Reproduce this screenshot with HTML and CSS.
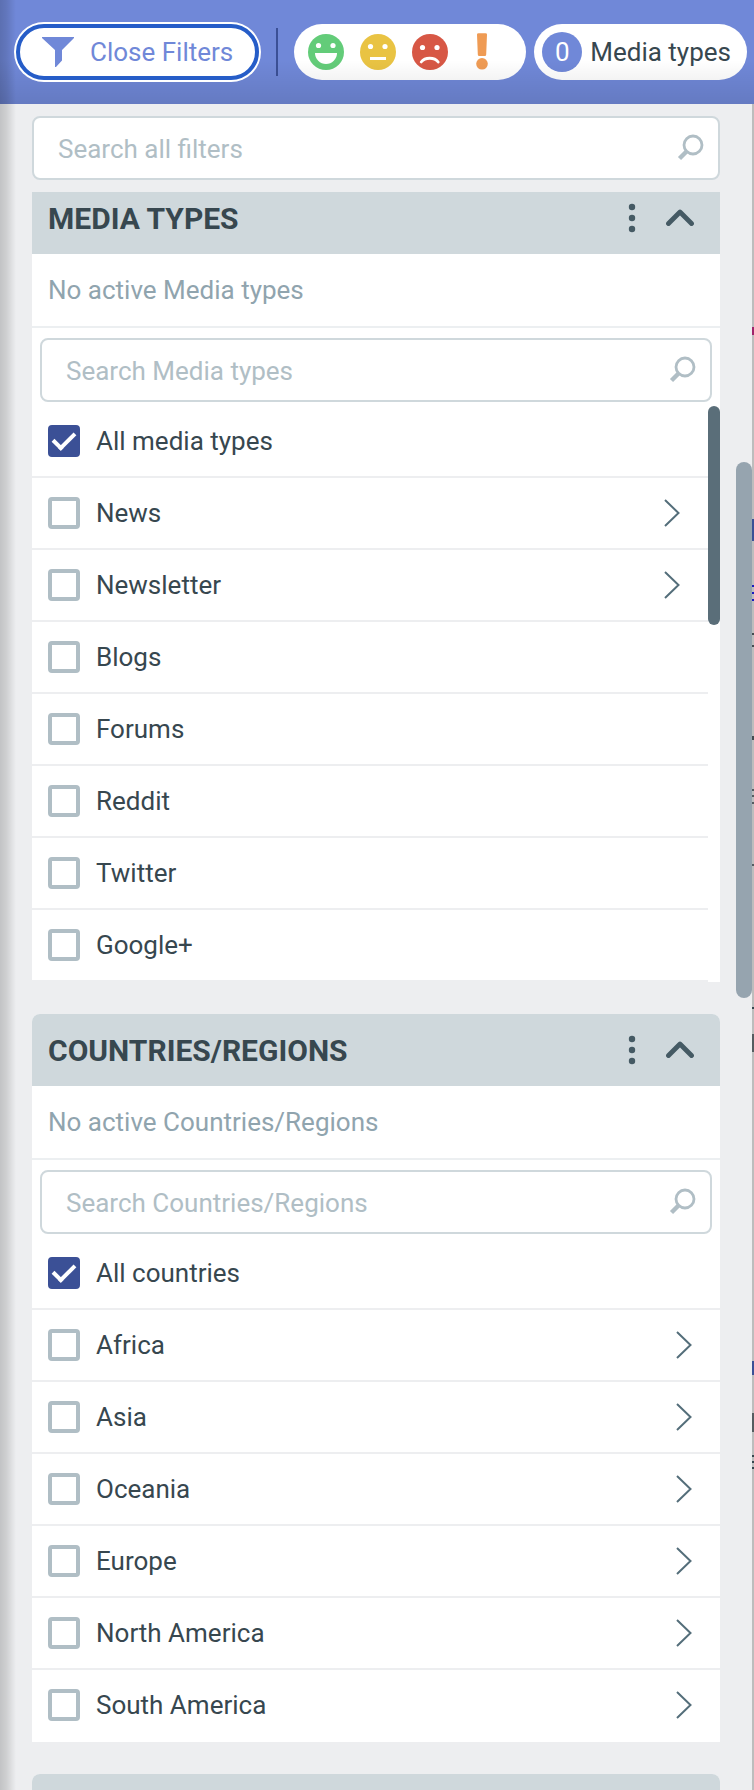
FILE: index.html
```html
<!DOCTYPE html>
<html lang="en">
<head>
<meta charset="utf-8">
<meta name="viewport" content="width=device-width, initial-scale=1">
<title>Filters</title>
<link rel="stylesheet" href="styles.css">
</head>
<body>
<svg class="sprite" aria-hidden="true">
  <symbol id="search" viewBox="0 0 28 28"><circle cx="17" cy="11" r="9" fill="none" stroke="currentColor" stroke-width="2.800"/><path d="M11 17L3.500 24.500" fill="none" stroke="currentColor" stroke-width="4.500"/></symbol>
  <symbol id="dots" viewBox="0 0 8 30"><circle cx="4" cy="4" r="3.200"/><circle cx="4" cy="15" r="3.200"/><circle cx="4" cy="26" r="3.200"/></symbol>
  <symbol id="up" viewBox="0 0 28 18"><path d="M2.500 14.500L14 3L25.500 14.500" fill="none" stroke="currentColor" stroke-width="4.800" stroke-linecap="round" stroke-linejoin="round"/></symbol>
  <symbol id="right" viewBox="0 0 16 28"><path d="M1 1L14.500 14L1 27" fill="none" stroke="currentColor" stroke-width="2"/></symbol>
</svg>

<header class="topbar">
  <button class="close" type="button">
    <svg class="funnel" viewBox="0 0 32 30" aria-hidden="true"><path d="M0 0H32V1L20 13V23.500L14 30H13V13L0 1Z" fill="currentColor"/></svg>
    Close Filters
  </button>
  <span class="divider"></span>
  <div class="pill moods">
    <button class="mood" type="button" aria-label="Positive"><svg viewBox="0 0 36 36"><circle cx="18" cy="18" r="18" fill="#63cc79"/><g fill="#fff"><circle cx="10.500" cy="11.500" r="2.600"/><circle cx="25" cy="11.500" r="2.600"/><path d="M7 19H29A11 11 0 0 1 7 19Z"/></g></svg></button>
    <button class="mood" type="button" aria-label="Neutral"><svg viewBox="0 0 36 36"><circle cx="18" cy="18" r="18" fill="#e9c343"/><g fill="#fff"><circle cx="10.500" cy="12.500" r="2.600"/><circle cx="25" cy="12.500" r="2.600"/><path d="M10 23H26V26H10Z"/></g></svg></button>
    <button class="mood" type="button" aria-label="Negative"><svg viewBox="0 0 36 36"><circle cx="18" cy="18" r="18" fill="#d75745"/><g fill="#fff"><circle cx="10.500" cy="13.500" r="2.600"/><circle cx="25" cy="13.500" r="2.600"/></g><path d="M9.200 28C13 23 22.500 23 26.200 28" fill="none" stroke="#fff" stroke-width="2.800" stroke-linecap="round"/></svg></button>
    <button class="mood" type="button" aria-label="Important"><svg viewBox="0 0 36 36"><path d="M13 0.500Q13 -0.800 14.500 -0.800H21.500Q23 -0.800 23 0.500L22.200 20.500Q22.200 22 20.700 22H15.300Q13.800 22 13.800 20.500Z" fill="#ef9b54"/><circle cx="18" cy="29.800" r="5.800" fill="#ef9b54"/></svg></button>
  </div>
  <button class="pill types" type="button"><span class="count">0</span>Media types</button>
</header>

<main class="stage">
  <div class="panel">
    <div class="field field-all">
      <input type="text" placeholder="Search all filters" aria-label="Search all filters">
      <svg class="lens" aria-hidden="true"><use href="#search"/></svg>
    </div>

    <section class="card">
      <div class="card-head card-head-stuck">
        <h2>MEDIA TYPES</h2>
        <button class="icon" type="button" aria-label="More options"><svg class="dots"><use href="#dots"/></svg></button>
        <button class="icon" type="button" aria-label="Collapse"><svg class="up"><use href="#up"/></svg></button>
      </div>
      <p class="active">No active Media types</p>
      <div class="field">
        <input type="text" placeholder="Search Media types" aria-label="Search Media types">
        <svg class="lens" aria-hidden="true"><use href="#search"/></svg>
      </div>
      <div class="scroll">
        <ul class="list">
          <li><label><input type="checkbox" checked>All media types</label></li>
          <li><label><input type="checkbox">News</label><button class="icon" type="button" aria-label="Open News"><svg class="right"><use href="#right"/></svg></button></li>
          <li><label><input type="checkbox">Newsletter</label><button class="icon" type="button" aria-label="Open Newsletter"><svg class="right"><use href="#right"/></svg></button></li>
          <li><label><input type="checkbox">Blogs</label></li>
          <li><label><input type="checkbox">Forums</label></li>
          <li><label><input type="checkbox">Reddit</label></li>
          <li><label><input type="checkbox">Twitter</label></li>
          <li><label><input type="checkbox">Google+</label></li>
        </ul>
        <div class="track"><div class="thumb"></div></div>
      </div>
    </section>

    <section class="card">
      <div class="card-head">
        <h2>COUNTRIES/REGIONS</h2>
        <button class="icon" type="button" aria-label="More options"><svg class="dots"><use href="#dots"/></svg></button>
        <button class="icon" type="button" aria-label="Collapse"><svg class="up"><use href="#up"/></svg></button>
      </div>
      <p class="active">No active Countries/Regions</p>
      <div class="field">
        <input type="text" placeholder="Search Countries/Regions" aria-label="Search Countries/Regions">
        <svg class="lens" aria-hidden="true"><use href="#search"/></svg>
      </div>
      <ul class="list list-full">
        <li><label><input type="checkbox" checked>All countries</label></li>
        <li><label><input type="checkbox">Africa</label><button class="icon" type="button" aria-label="Open Africa"><svg class="right"><use href="#right"/></svg></button></li>
        <li><label><input type="checkbox">Asia</label><button class="icon" type="button" aria-label="Open Asia"><svg class="right"><use href="#right"/></svg></button></li>
        <li><label><input type="checkbox">Oceania</label><button class="icon" type="button" aria-label="Open Oceania"><svg class="right"><use href="#right"/></svg></button></li>
        <li><label><input type="checkbox">Europe</label><button class="icon" type="button" aria-label="Open Europe"><svg class="right"><use href="#right"/></svg></button></li>
        <li><label><input type="checkbox">North America</label><button class="icon" type="button" aria-label="Open North America"><svg class="right"><use href="#right"/></svg></button></li>
        <li><label><input type="checkbox">South America</label><button class="icon" type="button" aria-label="Open South America"><svg class="right"><use href="#right"/></svg></button></li>
      </ul>
    </section>

    <section class="card"><div class="card-head"></div></section>
  </div>
  <div class="page-thumb"></div>
</main>
<div class="edge"></div>
</body>
</html>
```
FILE: styles.css
```css
*, *::before, *::after { box-sizing: border-box; }

/* The dimmed page shows as a sliver to the right of the filter panel. */
body {
  margin: 0;
  height: 100vh;
  overflow: hidden;
  display: flex;
  flex-direction: column;
  position: relative;
  background: linear-gradient(
    #bdbdbd 327px, #a0246a 327px 335px, #bdbdbd 335px 519px,
    #3b5096 519px 541px, #bdbdbd 541px 585px,
    #1a1ac0 585px 587px, #bdbdbd 587px 592px, #1a1ac0 592px 594px, #bdbdbd 594px 599px, #1a1ac0 599px 601px, #bdbdbd 601px 633px,
    #444c50 633px 635px, #bdbdbd 635px 645px, #444c50 645px 647px, #bdbdbd 647px 736px,
    #444c50 736px 740px, #bdbdbd 740px 789px,
    #555c60 789px 791px, #bdbdbd 791px 795px, #555c60 795px 797px, #bdbdbd 797px 802px, #555c60 802px 804px, #bdbdbd 804px 864px,
    #555c60 864px 866px, #bdbdbd 866px 1007px,
    #37474f 1007px 1009px, #bdbdbd 1009px 1034px, #555c60 1034px 1052px, #bdbdbd 1052px 1361px,
    #3b5096 1361px 1375px, #bdbdbd 1375px 1413px, #555c60 1413px 1432px, #bdbdbd 1432px 1455px,
    #37474f 1455px 1457px, #bdbdbd 1457px 1461px, #37474f 1461px 1463px, #bdbdbd 1463px 1467px, #37474f 1467px 1469px, #bdbdbd 1469px);
  color: #37474f;
  font: 26px/32px Roboto, sans-serif;
}

button, input { font: inherit; color: inherit; margin: 0; }
button { border: 0; padding: 0; background: none; }
svg { display: block; }
.sprite { display: none; }

.topbar {
  position: relative;
  flex: none;
  height: 104px;
  padding: 0 6px 0 14px;
  display: flex;
  align-items: center;
  background: #7088d8;
}
.topbar::after {
  content: "";
  position: absolute;
  inset: 60px 0 0 0;
  background: linear-gradient(transparent, rgba(0, 0, 0, 0.1));
  pointer-events: none;
}

.close {
  position: relative;
  z-index: 1;
  height: 56px;
  margin: 0 17px 0 2px;
  padding: 0 22px;
  display: flex;
  align-items: center;
  gap: 16px;
  flex: none;
  border: 4px solid #265dc8;
  border-radius: 28px;
  background: #fff;
  box-shadow: 0 0 0 2px #fff;
  color: #7088d8;
}
.funnel { width: 32px; height: 30px; }
.divider { flex: none; width: 2px; height: 48px; margin-right: 16px; background: #3b5096; }

.pill {
  height: 56px;
  display: flex;
  align-items: center;
  flex: none;
  border-radius: 28px;
  background: #fff;
}
.moods { gap: 16px; padding: 0 26px 0 14px; margin-right: 8px; }
.mood svg { width: 36px; height: 36px; overflow: visible; }
.types { gap: 8px; padding: 0 16px 0 8px; }
.count {
  width: 40px;
  height: 40px;
  border-radius: 50%;
  background: #7088d8;
  color: #fff;
  line-height: 40px;
  text-align: center;
}

.stage {
  position: relative;
  flex: 1;
  min-height: 0;
  margin-right: 2px;
  overflow: hidden;
  background: #edeef0;
}
.panel { padding: 12px 32px 0; }

.field {
  height: 64px;
  margin: 10px 8px 4px;
  padding-right: 14px;
  display: flex;
  align-items: center;
  border: 2px solid #cfd8dc;
  border-radius: 8px;
  background: #fff;
}
.field-all { margin: 0 0 12px; }
.field input {
  flex: 1;
  min-width: 0;
  height: 34px;
  padding: 2px 0 0 24px;
  border: 0;
  outline: 0;
  background: none;
}
.field input::placeholder { color: #b0bec5; opacity: 1; }
.lens { width: 28px; height: 28px; color: #b0bec5; }

.card { margin-bottom: 32px; background: #fff; border-radius: 8px 8px 0 0; }
.card-head {
  height: 72px;
  padding: 0 26px 0 16px;
  display: flex;
  align-items: center;
  gap: 30px;
  border-radius: 8px 8px 0 0;
  background: #cfd8dc;
}
.card-head-stuck { height: 62px; padding-bottom: 10px; border-radius: 0; }
h2 { flex: 1; margin: 0; padding-top: 2px; font-size: 30px; line-height: 36px; font-weight: 700; }
.dots { width: 8px; height: 30px; fill: #455a64; }
.up { width: 28px; height: 18px; color: #455a64; overflow: visible; }

.active {
  margin: 0;
  padding: 20px 16px;
  border-bottom: 2px solid #eceff1;
  color: #90a4ae;
}

.scroll { display: flex; }
.list { flex: 1; margin: 0; padding: 0; list-style: none; }
.list li {
  height: 72px;
  padding: 0 28px 0 16px;
  display: flex;
  align-items: center;
  border-bottom: 2px solid #edeef0;
}
.list-full li:last-child { border-bottom-color: #fff; }
.list label { flex: 1; display: flex; align-items: center; gap: 16px; }
.right { width: 16px; height: 28px; color: #546e7a; }

input[type="checkbox"] {
  appearance: none;
  width: 32px;
  height: 32px;
  border: 4px solid #b0bec5;
  border-radius: 4px;
  background: #fff;
}
input[type="checkbox"]:checked {
  display: grid;
  place-items: center;
  border-color: #3b5096;
  background: #3b5096;
}
input[type="checkbox"]:checked::before {
  content: "";
  width: 22px;
  height: 13px;
  margin-bottom: 6px;
  border: solid #fff;
  border-width: 0 0 4px 4px;
  transform: rotate(-45deg);
}

.track { width: 12px; }
.thumb { height: 38%; border-radius: 6px; background: #5a6e79; }

.page-thumb {
  position: absolute;
  top: 358px;
  right: 0;
  width: 16px;
  height: 536px;
  border-radius: 8px;
  background: #96a4af;
}
.edge {
  position: absolute;
  inset: 0 auto 0 0;
  width: 16px;
  background: linear-gradient(90deg, rgba(0, 0, 0, 0.18), rgba(0, 0, 0, 0.13) 40%, transparent);
  pointer-events: none;
}
```
